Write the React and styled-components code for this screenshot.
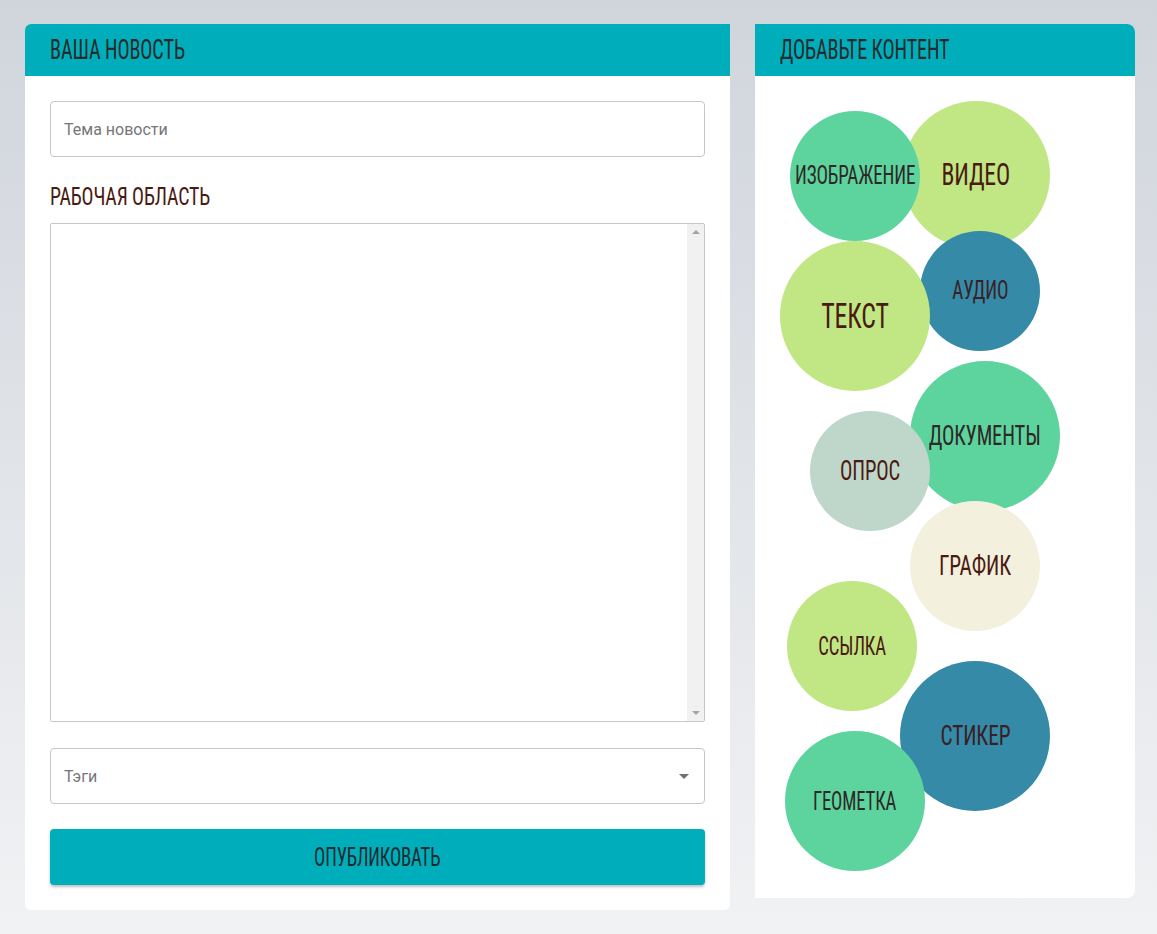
import React from 'react';
import styled, { createGlobalStyle } from 'styled-components';

const Global = createGlobalStyle`
  html, body { margin: 0; padding: 0; }
  body {
    min-height: 934px;
    background: linear-gradient(180deg, #d0d5dc 0%, #f1f2f4 100%);
    font-family: Roboto, "Liberation Sans", sans-serif;
  }
`;

const condensed = `"Roboto Condensed", "Liberation Sans Narrow", "DejaVu Sans Condensed", sans-serif`;

// narrow display type: the condensed face, squeezed a bit more
const Narrow = styled.span`
  display: inline-block;
  font-family: ${condensed};
  font-size: ${(p) => p.$size}px;
  line-height: 1;
  letter-spacing: -0.2px;
  white-space: nowrap;
  transform: scaleX(0.75);
  transform-origin: ${(p) => (p.$center ? 'center' : 'left')} center;
`;

const Page = styled.div`
  display: flex;
  align-items: flex-start;
  gap: 25px;
  padding: 24px 22px 24px 25px;
`;

const Card = styled.section`
  width: ${(p) => p.$width}px;
  background: #fff;
  border-radius: ${(p) => p.$radius};
  overflow: hidden;
  display: flex;
  flex-direction: column;
`;

const CardHeader = styled.div`
  height: 52px;
  background: #00aebb;
  display: flex;
  align-items: center;
  padding: 0 25px;
  color: #272b2d;
`;

const Body = styled.div`
  padding: 25px;
  display: flex;
  flex-direction: column;
`;

const TextInput = styled.input`
  box-sizing: border-box;
  height: 56px;
  width: 100%;
  border: 1px solid #c6c6c6;
  border-radius: 4px;
  padding: 0 13px;
  font-family: Roboto, "Liberation Sans", sans-serif;
  font-size: 16px;
  color: #333;
  outline: none;
  &::placeholder { color: #767676; }
`;

const Label = styled.h3`
  margin: 27px 0 14px;
  height: 25px;
  font-weight: 400;
  color: #4a1a10;
  display: flex;
  align-items: center;
`;

const Editor = styled.div`
  box-sizing: border-box;
  height: 499px;
  border: 1px solid #c6c6c6;
  border-radius: 2px;
  display: flex;
`;

const Area = styled.textarea`
  flex: 1;
  border: none;
  resize: none;
  outline: none;
  font-family: Roboto, sans-serif;
  font-size: 15px;
`;

const Track = styled.div`
  width: 17px;
  background: #f1f1f1;
  display: flex;
  flex-direction: column;
  justify-content: space-between;
  align-items: center;
  padding: 6px 0;
`;

const Arrow = styled.span`
  width: 0;
  height: 0;
  border-left: 4px solid transparent;
  border-right: 4px solid transparent;
  ${(p) => (p.$up ? 'border-bottom: 4px solid #a3a3a3;' : 'border-top: 4px solid #a3a3a3;')}
`;

const Select = styled.div`
  box-sizing: border-box;
  margin-top: 26px;
  height: 56px;
  border: 1px solid #c6c6c6;
  border-radius: 4px;
  padding: 0 15px 0 13px;
  display: flex;
  align-items: center;
  justify-content: space-between;
  font-family: Roboto, "Liberation Sans", sans-serif;
  font-size: 16px;
  color: #767676;
`;

const Caret = styled.span`
  width: 0;
  height: 0;
  border-left: 5px solid transparent;
  border-right: 5px solid transparent;
  border-top: 5px solid #707070;
`;

const Button = styled.button`
  margin-top: 25px;
  height: 56px;
  width: 100%;
  border: none;
  border-radius: 4px;
  background: #00aebb;
  box-shadow: 0 2px 3px rgba(0, 0, 0, 0.25);
  color: #1d2b30;
  display: flex;
  align-items: center;
  justify-content: center;
  cursor: pointer;
`;

const Canvas = styled.div`
  position: relative;
  height: 822px;
`;

const Bubble = styled.div`
  position: absolute;
  left: ${(p) => p.$x}px;
  top: ${(p) => p.$y}px;
  width: ${(p) => p.$d}px;
  height: ${(p) => p.$d}px;
  border-radius: 50%;
  background: ${(p) => p.$bg};
  display: flex;
  align-items: center;
  justify-content: center;
  color: ${(p) => p.$color || '#4a1a10'};
  cursor: pointer;
`;

const bubbles = [
  { t: 'ВИДЕО', x: 147, y: 25, d: 148, bg: '#c0e784', fs: 31.5 },
  { t: 'ИЗОБРАЖЕНИЕ', x: 35, y: 35, d: 130, bg: '#5dd39e', fs: 25.5, c: '#2e2826' },
  { t: 'АУДИО', x: 165, y: 155, d: 120, bg: '#348aa7', fs: 25.5, c: '#3a2024' },
  { t: 'ТЕКСТ', x: 25, y: 165, d: 150, bg: '#c0e784', fs: 34.5 },
  { t: 'ДОКУМЕНТЫ', x: 155, y: 285, d: 150, bg: '#5dd39e', fs: 27.5, c: '#2e2826' },
  { t: 'ОПРОС', x: 55, y: 335, d: 120, bg: '#bfd7cb', fs: 27.5 },
  { t: 'ГРАФИК', x: 155, y: 425, d: 130, bg: '#f3f0de', fs: 28.5 },
  { t: 'ССЫЛКА', x: 32, y: 505, d: 130, bg: '#c0e784', fs: 25 },
  { t: 'СТИКЕР', x: 145, y: 585, d: 150, bg: '#348aa7', fs: 28.5, c: '#3a2024' },
  { t: 'ГЕОМЕТКА', x: 30, y: 655, d: 140, bg: '#5dd39e', fs: 25, c: '#2e2826' },
];

export default function App() {
  return (
    <>
      <Global />
      <Page>
        <Card $width={705} $radius="6px 0 6px 6px">
          <CardHeader>
            <Narrow $size={27}>ВАША НОВОСТЬ</Narrow>
          </CardHeader>
          <Body>
            <TextInput placeholder="Тема новости" />
            <Label>
              <Narrow $size={26.5}>РАБОЧАЯ ОБЛАСТЬ</Narrow>
            </Label>
            <Editor>
              <Area />
              <Track>
                <Arrow $up />
                <Arrow />
              </Track>
            </Editor>
            <Select>
              <span>Тэги</span>
              <Caret />
            </Select>
            <Button>
              <Narrow $size={25} $center>ОПУБЛИКОВАТЬ</Narrow>
            </Button>
          </Body>
        </Card>
        <Card $width={380} $radius="0 8px 8px 0">
          <CardHeader>
            <Narrow $size={27}>ДОБАВЬТЕ КОНТЕНТ</Narrow>
          </CardHeader>
          <Canvas>
            {bubbles.map((b) => (
              <Bubble key={b.t} $x={b.x} $y={b.y} $d={b.d} $bg={b.bg} $color={b.c}>
                <Narrow $size={b.fs} $center>{b.t}</Narrow>
              </Bubble>
            ))}
          </Canvas>
        </Card>
      </Page>
    </>
  );
}
